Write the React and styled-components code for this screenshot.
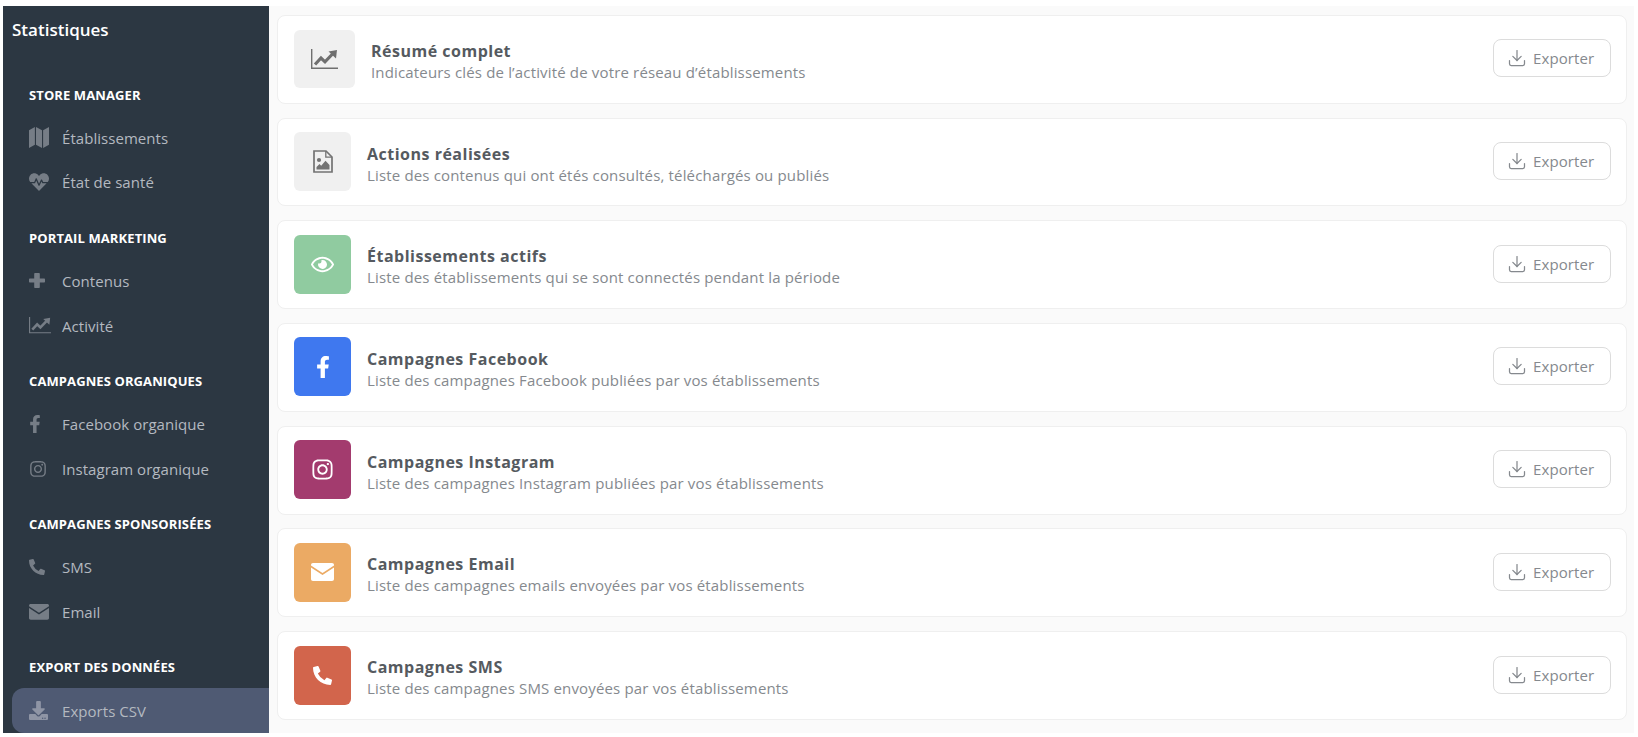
import React from "react";
import styled, { createGlobalStyle } from "styled-components";
import { FaHeartbeat, FaFacebookF, FaInstagram, FaPhoneAlt, FaDownload, FaRegEye } from "react-icons/fa";
import { Download } from "lucide-react";

const Global = createGlobalStyle`
  html, body { margin: 0; padding: 0; background: #fff; }
  body { font-family: "Open Sans", "Liberation Sans", sans-serif; }
  * { box-sizing: border-box; }
`;

const MapIcon = ({ w = 20 }) => (
  <svg width={w} viewBox="0 0 20 21" fill="currentColor">
    <path d="M0 3.2 5.9 0v17.8L0 21Z" />
    <path d="M7 0l6 3.2V21l-6-3.2Z" />
    <path d="M14.1 3.2 20 0v17.8L14.1 21Z" />
  </svg>
);

const PlusIcon = () => (
  <svg width="16" height="15" viewBox="0 0 16 15" fill="currentColor">
    <path d="M6.2 0h3.6c.6 0 1 .4 1 1v4.6H15c.6 0 1 .4 1 1v1.8c0 .6-.4 1-1 1h-4.2V14c0 .6-.4 1-1 1H6.2c-.6 0-1-.4-1-1V9.400H1c-.6 0-1-.4-1-1V6.600c0-.6.4-1 1-1h4.200V1c0-.6.4-1 1-1Z" />
  </svg>
);

const LineChartIcon = ({ w = 22 }) => (
  <svg width={w} viewBox="0 0 27 20" fill="none">
    <path d="M.7 0v19.300H27" stroke="currentColor" strokeWidth="1.400" />
    <path d="M4 15.500 10 9l4 3.800 7.500-7.800" stroke="currentColor" strokeWidth="3.200" />
    <path d="M17.500 2.500 26 1l-1 8.500Z" fill="currentColor" />
  </svg>
);

const EnvelopeIcon = ({ w = 20 }) => (
  <svg width={w} viewBox="0 0 23 18" fill="currentColor">
    <path d="M0 2C0 .8.800 0 2 0h19c1.200 0 2 .8 2 2v.6L11.500 10 0 2.600Z" />
    <path d="M0 4.500 11.500 12 23 4.500V16c0 1.200-.8 2-2 2H2c-1.200 0-2-.8-2-2Z" />
  </svg>
);

const FileImageIcon = () => (
  <svg width="20" height="23" viewBox="0 0 20 23" fill="none">
    <path d="M1 1h12l6 6v15H1Z" stroke="currentColor" strokeWidth="1.700" />
    <path d="M12.800 1v6.200H19" stroke="currentColor" strokeWidth="1.300" />
    <circle cx="6" cy="10" r="2.100" fill="currentColor" />
    <path d="M3.500 19.500V17l3-3 1.700 1.700 4.300-5 4 4.200v4.600Z" fill="currentColor" />
  </svg>
);

const Page = styled.div`
  display: flex;
  height: 737px;
  padding: 6px 4px 4px 3px;
  overflow: hidden;
`;

const Sidebar = styled.aside`
  width: 266px;
  flex: none;
  background: #2c3742;
  padding: 14px 0 0 9px;
  display: flex;
  flex-direction: column;
  overflow: hidden;
`;

const Brand = styled.div`
  font-size: 17px;
  font-weight: 600;
  line-height: 20px;
  color: #fff;
  margin-bottom: 44.500px;
`;

const Group = styled.section`
  display: flex;
  flex-direction: column;
  margin-bottom: 23px;
`;

const GroupLabel = styled.div`
  font-size: 13px;
  font-weight: 700;
  letter-spacing: 0.1px;
  line-height: 20px;
  color: #fff;
  padding-left: 17px;
  margin-bottom: 11px;
  text-transform: uppercase;
`;

const NavItem = styled.div`
  display: flex;
  align-items: center;
  height: 44.600px;
  padding-left: 17px;
  border-radius: 12px 0 0 12px;
  background: ${(p) => (p.$active ? "#4f5a73" : "transparent")};
  color: #b4b9c0;
  font-size: 15px;
  letter-spacing: 0.05px;
`;

const NavIcon = styled.span`
  width: 33px;
  flex: none;
  display: flex;
  align-items: center;
  color: ${(p) => (p.$active ? "#8f95a5" : "#767d86")};
  font-size: ${(p) => p.$size || 20}px;

  svg { margin-left: ${(p) => p.$shift || 0}px; }
`;

const Main = styled.main`
  flex: 1;
  background: #fafafa;
  padding: 9px 7px 0 8px;
  display: flex;
  flex-direction: column;
  gap: 13.900px;
`;

const Card = styled.article`
  display: flex;
  align-items: center;
  height: 88.800px;
  flex: none;
  padding: 0 15px 0 16px;
  background: #fff;
  border: 1px solid #efefef;
  border-radius: 8px;
`;

const Tile = styled.div`
  width: ${(p) => (p.$wide ? 61 : 57)}px;
  height: ${(p) => (p.$wide ? 58 : 59)}px;
  flex: none;
  margin-top: -1px;
  display: flex;
  align-items: center;
  justify-content: center;
  border-radius: 6px;
  background: ${(p) => p.$bg};
  color: ${(p) => p.$fg};
  font-size: ${(p) => p.$size || 22}px;
`;

const Texts = styled.div`
  flex: 1;
  margin-left: 16px;
  min-width: 0;
  padding-top: 6px;
`;

const Title = styled.h3`
  margin: 0;
  font-size: 16px;
  font-weight: 700;
  letter-spacing: 0.5px;
  line-height: 20px;
  color: #555a60;
`;

const Description = styled.p`
  margin: 0;
  font-size: 15px;
  letter-spacing: 0.16px;
  line-height: 23px;
  color: #85898e;
`;

const ExportButton = styled.button`
  display: flex;
  align-items: center;
  gap: 6px;
  width: 118px;
  height: 38px;
  flex: none;
  margin-top: -2px;
  padding: 0 0 0 13px;
  background: #fff;
  border: 1px solid #dcdcdc;
  border-radius: 8px;
  color: #85898e;
  font: 400 15px "Open Sans", sans-serif;
  letter-spacing: 0.1px;
`;

const groups = [
  { label: "Store manager", items: [
    { name: "Établissements", icon: <MapIcon /> },
    { name: "État de santé", icon: <FaHeartbeat />, size: 20 },
  ]},
  { label: "Portail marketing", items: [
    { name: "Contenus", icon: <PlusIcon /> },
    { name: "Activité", icon: <LineChartIcon /> },
  ]},
  { label: "Campagnes organiques", items: [
    { name: "Facebook organique", icon: <FaFacebookF />, size: 18, shift: -3 },
    { name: "Instagram organique", icon: <FaInstagram />, size: 18 },
  ]},
  { label: "Campagnes sponsorisées", items: [
    { name: "SMS", icon: <FaPhoneAlt />, size: 16 },
    { name: "Email", icon: <EnvelopeIcon /> },
  ]},
  { label: "Export des données", items: [
    { name: "Exports CSV", icon: <FaDownload />, size: 19, active: true },
  ]},
];

const exportsList = [
  { title: "Résumé complet", text: "Indicateurs clés de l’activité de votre réseau d’établissements", icon: <LineChartIcon w={27} />, bg: "#f0f0f0", fg: "#6f6f6f", wide: true },
  { title: "Actions réalisées", text: "Liste des contenus qui ont étés consultés, téléchargés ou publiés", icon: <FileImageIcon />, bg: "#f0f0f0", fg: "#737373" },
  { title: "Établissements actifs", text: "Liste des établissements qui se sont connectés pendant la période", icon: <FaRegEye />, bg: "#90cba0", fg: "#fff", size: 23 },
  { title: "Campagnes Facebook", text: "Liste des campagnes Facebook publiées par vos établissements", icon: <FaFacebookF />, bg: "#3f78ef", fg: "#fff", size: 22 },
  { title: "Campagnes Instagram", text: "Liste des campagnes Instagram publiées par vos établissements", icon: <FaInstagram />, bg: "#a33b6e", fg: "#fff", size: 23 },
  { title: "Campagnes Email", text: "Liste des campagnes emails envoyées par vos établissements", icon: <EnvelopeIcon w={23} />, bg: "#ebaa64", fg: "#fff" },
  { title: "Campagnes SMS", text: "Liste des campagnes SMS envoyées par vos établissements", icon: <FaPhoneAlt />, bg: "#d2654c", fg: "#fff", size: 19 },
];

export default function App() {
  return (
    <>
      <Global />
      <Page>
        <Sidebar>
          <Brand>Statistiques</Brand>
          {groups.map((g) => (
            <Group key={g.label}>
              <GroupLabel>{g.label}</GroupLabel>
              {g.items.map(({ name, icon, size, active, shift }) => (
                <NavItem key={name} $active={active}>
                  <NavIcon $size={size} $active={active} $shift={shift}>{icon}</NavIcon>
                  {name}
                </NavItem>
              ))}
            </Group>
          ))}
        </Sidebar>
        <Main>
          {exportsList.map(({ title, text, icon, bg, fg, size, wide }) => (
            <Card key={title}>
              <Tile $bg={bg} $fg={fg} $size={size} $wide={wide}>{icon}</Tile>
              <Texts>
                <Title>{title}</Title>
                <Description>{text}</Description>
              </Texts>
              <ExportButton><Download size={20} strokeWidth={1.500} />Exporter</ExportButton>
            </Card>
          ))}
        </Main>
      </Page>
    </>
  );
}
